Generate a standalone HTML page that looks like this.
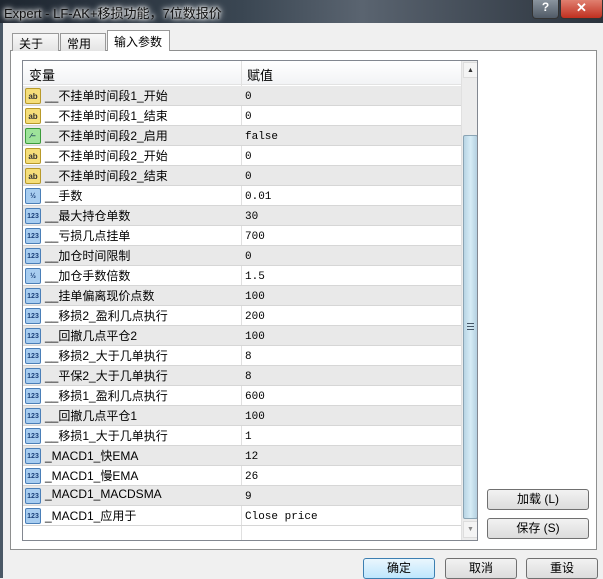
<!DOCTYPE html>
<html><head><meta charset="utf-8"><style>
*{margin:0;padding:0;box-sizing:border-box}
body{width:603px;height:578px;overflow:hidden;background:#f0f0f0;font-family:"Liberation Sans","Noto Sans CJK SC",sans-serif;font-size:12px;color:#000;position:relative}
.title{position:absolute;left:0;top:0;width:603px;height:23px;background:linear-gradient(90deg,#1e2630,#3a4652 40%,#5a6470 60%,#2a323c);color:#000}
.title span{position:absolute;left:4px;top:3px;font-size:13px;color:#111;text-shadow:0 0 6px #fff,0 0 8px #fff,0 0 3px #fff}
.hb{position:absolute;top:0;height:19px;border:1px solid #333;border-top:none;border-radius:0 0 4px 4px}
.leftedge{position:absolute;left:0;top:23px;width:3px;height:555px;background:#4a5866}
.tab{position:absolute;top:33px;height:18px;border:1px solid #999;border-bottom:none;background:linear-gradient(#f8f8f8,#e4e4e4);padding:1px 6px;font-size:12px}
.panel{position:absolute;left:10px;top:50px;width:587px;height:500px;background:#fff;border:1px solid #8e8f8f}
.list{position:absolute;left:22px;top:60px;width:456px;height:481px;border:1px solid #828790;background:#fff;overflow:hidden}
.hdr{position:absolute;left:0;top:0;width:438px;height:24px;background:linear-gradient(#fff,#f2f3f5);border-bottom:1px solid #e3e3e3}
.hdr span{position:absolute;top:4px;font-size:13px}
.row{position:absolute;left:0;width:438px;height:20px;border-bottom:1px solid #d6d6d6}
.row.g{background:#e9e9e9}
.row .n{position:absolute;left:22px;top:1px;font-size:12px}
.row .v{position:absolute;left:222px;top:5px;font-family:"Liberation Mono","Noto Sans CJK SC",monospace;font-size:11px}
.div{position:absolute;left:218px;top:0;width:1px;height:481px;background:#e0e0e0}
.ic{position:absolute;left:2px;top:2px;width:16px;height:16px;border-radius:2px;font-size:7px;font-weight:bold;text-align:center;line-height:15px}
.ab{background:#f5de7a;border:1px solid #b89a2a;color:#333;font-size:8px}
.bl{background:#a8cdf0;border:1px solid #4a7fb8;color:#1a3f78}
.gr{background:#9ee39a;border:1px solid #3c9c3a;color:#135}
.sb{position:absolute;left:438px;top:0;width:17px;height:479px;background:#ececec;border-left:1px solid #e0e0e0}
.btn{position:absolute;height:21px;border:1px solid #707070;border-radius:3px;background:linear-gradient(#f2f2f2,#dcdcdc);text-align:center;font-size:12px;line-height:19px}
</style></head><body>
<div class="title"><span>Expert - LF-AK+移损功能，7位数报价</span></div>
<div class="hb" style="left:532px;width:27px;background:linear-gradient(#8a949e,#505a66);color:#fff;text-align:center;font-weight:bold;font-size:12px">?</div>
<div class="hb" style="left:560px;width:43px;background:linear-gradient(#e08070,#c03020);color:#fff;text-align:center;font-weight:bold;font-size:13px">✕</div>
<div class="leftedge"></div>
<div class="panel"></div>
<div class="tab" style="left:12px;width:47px">关于</div>
<div class="tab" style="left:60px;width:46px">常用</div>
<div class="tab" style="left:107px;top:30px;height:21px;width:63px;background:#fff;padding-top:2px">输入参数</div>
<div class="list">
<div class="hdr"><span style="left:6px">变量</span><span style="left:224px">赋值</span></div>
<div class="div"></div>
<div id="rows"></div>
<div class="sb">
<div style="position:absolute;left:1px;top:1px;width:15px;height:16px;background:#f4f4f4;border:1px solid #ddd;font-size:7px;text-align:center;line-height:15px;color:#333">▲</div>
<div style="position:absolute;left:1px;top:74px;width:15px;height:384px;background:linear-gradient(90deg,#b8d4e4,#d6ecf6,#b4d0e0);border:1px solid #8aa4b4;border-radius:2px"><div style="position:absolute;left:3px;top:187px;width:7px;height:7px;border-top:1px solid #456;border-bottom:1px solid #456"></div><div style="position:absolute;left:3px;top:190px;width:7px;height:1px;background:#456"></div></div>
<div style="position:absolute;left:1px;top:460px;width:15px;height:17px;background:#f4f4f4;border:1px solid #ddd;font-size:7px;text-align:center;line-height:15px;color:#888">▼</div>
</div>
</div>
<div class="btn" style="left:487px;top:489px;width:102px">加载 (L)</div>
<div class="btn" style="left:487px;top:518px;width:102px">保存 (S)</div>
<div class="btn" style="left:363px;top:558px;width:72px;border-color:#3c7fb1;background:linear-gradient(#eaf6fd,#bee6fd)">确定</div>
<div class="btn" style="left:445px;top:558px;width:72px">取消</div>
<div class="btn" style="left:526px;top:558px;width:72px">重设</div>
<script>
var d=[["ab","__不挂单时间段1_开始","0"],["ab","__不挂单时间段1_结束","0"],["gr","__不挂单时间段2_启用","false"],["ab","__不挂单时间段2_开始","0"],["ab","__不挂单时间段2_结束","0"],["h","__手数","0.01"],["n","__最大持仓单数","30"],["n","__亏损几点挂单","700"],["n","__加仓时间限制","0"],["h","__加仓手数倍数","1.5"],["n","__挂单偏离现价点数","100"],["n","__移损2_盈利几点执行","200"],["n","__回撤几点平仓2","100"],["n","__移损2_大于几单执行","8"],["n","__平保2_大于几单执行","8"],["n","__移损1_盈利几点执行","600"],["n","__回撤几点平仓1","100"],["n","__移损1_大于几单执行","1"],["n","_MACD1_快EMA","12"],["n","_MACD1_慢EMA","26"],["n","_MACD1_MACDSMA","9"],["n","_MACD1_应用于","Close price"]];
var h="";d.forEach(function(r,i){var c=r[0]=="ab"?'<div class="ic ab">ab</div>':r[0]=="gr"?'<div class="ic gr">⁄‒</div>':r[0]=="h"?'<div class="ic bl">½</div>':'<div class="ic bl">123</div>';
h+='<div class="row'+(i%2==0?' g':'')+'" style="top:'+(25+20*i)+'px">'+c+'<span class="n">'+r[1]+'</span><span class="v">'+r[2]+'</span></div>';});
document.getElementById("rows").innerHTML=h;
</script>
</body></html>
